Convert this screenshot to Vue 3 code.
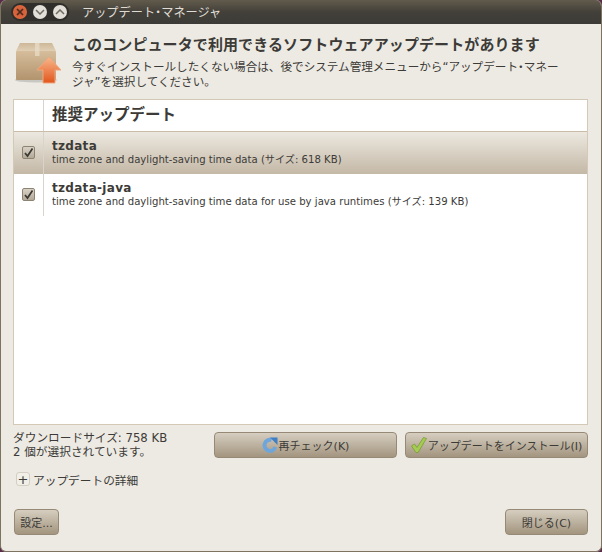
<script setup>
// 更新リスト
const updates = [
  { name: 'tzdata', desc: 'time zone and daylight-saving time data (サイズ: 618 KB)', selected: true },
  { name: 'tzdata-java', desc: 'time zone and daylight-saving time data for use by java runtimes (サイズ: 139 KB)', selected: false },
]
</script>

<template>
  <div class="window">
    <div class="titlebar">
      <div class="win-buttons">
        <span class="win-btn close">
          <svg width="8" height="8" viewBox="0 0 8 8"><path d="M1 1l6 6M7 1l-6 6" stroke="#4a2a1c" stroke-width="1.6" fill="none" /></svg>
        </span>
        <span class="win-btn">
          <svg width="10" height="6" viewBox="0 0 10 6"><path d="M1 1l4 4 4-4" stroke="#6f6b62" stroke-width="1.5" fill="none" /></svg>
        </span>
        <span class="win-btn">
          <svg width="10" height="6" viewBox="0 0 10 6"><path d="M1 5l4-4 4 4" stroke="#6f6b62" stroke-width="1.5" fill="none" /></svg>
        </span>
      </div>
      <span class="win-title">アップデート<span class="dot">・</span>マネージャ</span>
    </div>

    <div class="content">
      <div class="intro">
        <svg class="pkg-icon" width="48" height="48" viewBox="0 0 48 48">
          <defs>
            <linearGradient id="boxFront" x1="0" y1="0" x2="0" y2="1">
              <stop offset="0" stop-color="#d6bd9b" />
              <stop offset="1" stop-color="#b2946e" />
            </linearGradient>
            <linearGradient id="boxLid" x1="0" y1="0" x2="0" y2="1">
              <stop offset="0" stop-color="#cdb798" />
              <stop offset="1" stop-color="#e0cfb5" />
            </linearGradient>
            <linearGradient id="arrowFill" x1="0" y1="0" x2="0" y2="1">
              <stop offset="0" stop-color="#f8b78c" />
              <stop offset="1" stop-color="#e2561c" />
            </linearGradient>
          </defs>
          <ellipse cx="22" cy="40" rx="21" ry="2.500" fill="#000" opacity="0.15" />
          <path d="M6 3 H38 L42 11 H2 Z" fill="url(#boxLid)" />
          <rect x="2" y="11" width="40" height="29" rx="1" fill="url(#boxFront)" />
          <path d="M21 3h4.500v13H21z" fill="#e8dcc8" opacity="0.75" />
          <path d="M35 17 L47 30 H41 V43 H29 V30 H23 Z" fill="url(#arrowFill)" stroke="#eda77c" stroke-width="1" />
        </svg>
        <div class="intro-text">
          <div class="intro-title">このコンピュータで利用できるソフトウェアアップデートがあります</div>
          <div class="intro-desc">今すぐインストールしたくない場合は、後でシステム管理メニューから“アップデート<span class="dot">・</span>マネージャ”を選択してください。</div>
        </div>
      </div>

      <div class="list">
        <div class="list-head">
          <div class="check-col"></div>
          <div class="head-label">推奨アップデート</div>
        </div>
        <div v-for="item in updates" :key="item.name" class="row" :class="{ selected: item.selected }">
          <div class="check-col">
            <span class="checkbox">
              <svg width="11" height="11" viewBox="0 0 11 11"><path d="M2 6l2.500 3L9.500 1.500" stroke="#3a3833" stroke-width="1.700" fill="none" /></svg>
            </span>
          </div>
          <div class="row-text">
            <div class="pkg-name">{{ item.name }}</div>
            <div class="pkg-desc">{{ item.desc }}</div>
          </div>
        </div>
      </div>

      <div class="status-row">
        <div class="status-text">
          <div>ダウンロードサイズ: 758 KB</div>
          <div>2 個が選択されています。</div>
        </div>
        <button class="btn wide">
          <svg width="16" height="16" viewBox="0 0 16 16">
            <path d="M13.300 10 A5.500 5.500 0 1 1 9.500 3" fill="none" stroke="#6ea6dc" stroke-width="4" />
            <path d="M8 0.500 L15.500 0.500 L15.500 8 Z" fill="#3f7fc4" />
          </svg>
          <span>再チェック(K)</span>
        </button>
        <button class="btn wide">
          <svg width="16" height="16" viewBox="0 0 16 16">
            <path d="M0.500 9 L3.500 7 L6 10.500 L12.500 0.500 L15.500 1.500 L7 15.500 H5 Z" fill="#a5cc52" stroke="#7c9a35" stroke-width="0.800" />
          </svg>
          <span>アップデートをインストール(I)</span>
        </button>
      </div>

      <div class="details">
        <span class="expander">+</span>
        <span>アップデートの詳細</span>
      </div>

      <div class="footer">
        <button class="btn settings-btn">設定...</button>
        <button class="btn close-btn">閉じる(C)</button>
      </div>
    </div>
  </div>
</template>

<style>
html, body {
  margin: 0;
  background: #5a2a4a;
}
</style>

<style scoped>
.window {
  width: 602px;
  height: 552px;
  display: flex;
  flex-direction: column;
  box-sizing: border-box;
  border-radius: 6px;
  overflow: hidden;
  background: #edeae3;
  color: #3c3b37;
  font-family: "DejaVu Sans", "Noto Sans CJK JP", sans-serif;
  font-size: 11.700px;
  border-left: 1px solid #7e7361;
  border-right: 1px solid #7e7361;
  border-bottom: 1px solid #7e7361;
}

.titlebar {
  height: 24px;
  flex: none;
  display: flex;
  align-items: center;
  padding-left: 10px;
  background: linear-gradient(#625b4c, #43403a 50%, #3c3b37);
}

.win-buttons {
  display: flex;
  align-items: center;
  gap: 6px;
  height: 18px;
  padding: 0 2px;
  border-radius: 9px;
  background: #2f2e2a;
}

.win-btn {
  width: 14px;
  height: 14px;
  border-radius: 50%;
  display: flex;
  align-items: center;
  justify-content: center;
  background: #e2dfd8;
}

.win-btn.close {
  background: radial-gradient(circle, #c0583a, #ee6f3c);
}

.win-title {
  margin-left: 13px;
  font-size: 12.200px;
  color: #dfdbd2;
}

/* 中黒は参照画像では幅が狭い */
.dot {
  font-feature-settings: "halt";
}

.content {
  flex: 1;
  display: flex;
  flex-direction: column;
  padding: 0 13px 0 12px;
}

.intro {
  display: flex;
  height: 75px;
  box-sizing: border-box;
  padding-top: 14px;
}

.pkg-icon {
  flex: none;
  margin: 2px 10px 0 1px;
}

.intro-title {
  font-size: 15px;
  font-weight: bold;
  line-height: 16px;
  margin-top: -1px;
  letter-spacing: 0.100px;
  white-space: nowrap;
}

.intro-desc {
  font-size: 11.600px;
  line-height: 15px;
  margin-top: 7px;
  width: 490px;
  line-break: anywhere;
}

.list {
  height: 326px;
  box-sizing: border-box;
  background: #fff;
  border: 1px solid #d4c9b6;
}

.list-head {
  display: flex;
  height: 32px;
  border-bottom: 1px solid #c9bca8;
  box-sizing: border-box;
}

.check-col {
  flex: none;
  width: 30px;
  box-sizing: border-box;
  border-right: 1px solid #d8d4cb;
  padding-bottom: 1px;
  display: flex;
  align-items: center;
  justify-content: center;
}

.head-label {
  font-size: 15.500px;
  font-weight: bold;
  line-height: 31px;
  padding-left: 8px;
}

.row {
  display: flex;
  height: 42px;
}

.row.selected {
  background: linear-gradient(#ece8e0, #c4b8a6);
}

.checkbox {
  width: 11px;
  height: 11px;
  border-radius: 2px;
  border: 1px solid #8d8373;
  background: linear-gradient(#d8d1c5, #b3a998);
  display: flex;
}

.row-text {
  padding: 7px 0 0 8px;
}

.pkg-name {
  font-size: 12px;
  font-weight: bold;
  line-height: 14px;
  letter-spacing: 0.300px;
}

.pkg-desc {
  font-size: 10.150px;
  line-height: 14px;
}

.status-row {
  display: flex;
  align-items: flex-start;
  margin-top: 7px;
  height: 26px;
}

.status-text {
  width: 201px;
  line-height: 14px;
  margin-top: -1px;
}

.btn {
  height: 26px;
  box-sizing: border-box;
  border: 1px solid #968a76;
  border-radius: 4px;
  background: linear-gradient(#d6cec0, #a3957f);
  color: #3c3b37;
  font-family: inherit;
  font-size: 11px;
  padding: 0;
  white-space: nowrap;
  display: flex;
  align-items: center;
  justify-content: center;
  gap: 1px;
}

.btn.wide {
  width: 183px;
}

.btn.wide + .btn.wide {
  margin-left: 8px;
}

.details {
  display: flex;
  align-items: center;
  gap: 3px;
  margin-top: 11px;
  margin-left: 3px;
  height: 20px;
}

.expander {
  width: 12px;
  height: 12px;
  display: flex;
  align-items: center;
  justify-content: center;
  border: 1px solid #d4cfc4;
  border-radius: 3px;
  background: #f2efe9;
  font-size: 13px;
  line-height: 1;
}

.footer {
  display: flex;
  justify-content: space-between;
  margin-top: 20px;
  padding-left: 1px;
}

.settings-btn {
  width: 45px;
}

.close-btn {
  width: 83px;
}
</style>
